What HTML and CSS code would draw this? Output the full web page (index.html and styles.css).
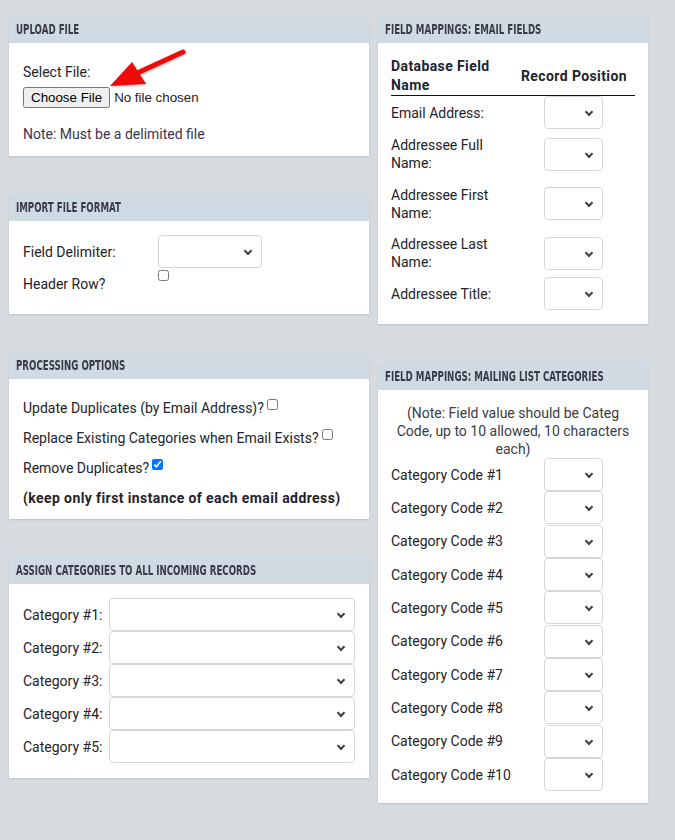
FILE: index.html
```html
<!DOCTYPE html>
<html lang="en">
<head>
<meta charset="utf-8">
<title>Import</title>
<link rel="stylesheet" href="styles.css">
</head>
<body>
<div class="page">
  <div class="col col-left">
    <section class="panel">
      <h2 class="panel-head"><span>Upload File</span></h2>
      <div class="panel-body upload">
        <label class="lbl-block">Select File:</label>
        <input type="file" class="file">
        <p class="note">Note: Must be a delimited file</p>
      </div>
      <svg class="arrow" width="200" height="100" viewBox="0 0 200 100">
        <line x1="126" y1="59" x2="174" y2="37" stroke="#ee0a0a" stroke-width="5" stroke-linecap="round"/>
        <polygon points="101,71 123,47 137,69" fill="#ee0a0a"/>
      </svg>
    </section>

    <section class="panel">
      <h2 class="panel-head"><span>Import File Format</span></h2>
      <div class="panel-body format">
        <label class="fmt-label">Field Delimiter:</label>
        <div class="sel sel-delim"><select></select></div>
        <label class="fmt-label hdr-label">Header Row?</label>
        <div><input type="checkbox" class="cb-hdr"></div>
      </div>
    </section>

    <section class="panel">
      <h2 class="panel-head"><span>Processing Options</span></h2>
      <div class="panel-body processing">
        <p class="opt">Update Duplicates (by Email Address)?<input type="checkbox" class="cb"></p>
        <p class="opt">Replace Existing Categories when Email Exists?<input type="checkbox" class="cb"></p>
        <p class="opt">Remove Duplicates?<input type="checkbox" class="cb" checked></p>
        <p class="opt bold">(keep only first instance of each email address)</p>
      </div>
    </section>

    <section class="panel">
      <h2 class="panel-head"><span>Assign Categories to All Incoming Records</span></h2>
      <div class="panel-body assign">
        <label class="row-label">Category #1:</label><div class="sel"><select></select></div>
        <label class="row-label">Category #2:</label><div class="sel"><select></select></div>
        <label class="row-label">Category #3:</label><div class="sel"><select></select></div>
        <label class="row-label">Category #4:</label><div class="sel"><select></select></div>
        <label class="row-label">Category #5:</label><div class="sel"><select></select></div>
      </div>
    </section>
  </div>

  <div class="col col-right">
    <section class="panel">
      <h2 class="panel-head"><span>Field Mappings: Email Fields</span></h2>
      <div class="panel-body mapping">
        <div class="map-head">
          <div class="mh-name">Database Field<br>Name</div>
          <div class="mh-pos">Record Position</div>
        </div>
        <div class="map-row">
          <label class="map-label">Email Address:</label>
          <div class="sel sel-small"><select></select></div>
        </div>
        <div class="map-row spaced">
          <label class="map-label">Addressee Full<br>Name:</label>
          <div class="sel sel-small"><select></select></div>
        </div>
        <div class="map-row spaced">
          <label class="map-label">Addressee First<br>Name:</label>
          <div class="sel sel-small"><select></select></div>
        </div>
        <div class="map-row tight">
          <label class="map-label">Addressee Last<br>Name:</label>
          <div class="sel sel-small"><select></select></div>
        </div>
        <div class="map-row last">
          <label class="map-label">Addressee Title:</label>
          <div class="sel sel-small"><select></select></div>
        </div>
      </div>
    </section>

    <section class="panel">
      <h2 class="panel-head"><span>Field Mappings: Mailing List Categories</span></h2>
      <div class="panel-body cats">
        <p class="cat-note">(Note: Field value should be Categ<br>Code, up to 10 allowed, 10 characters<br>each)</p>
        <div class="cat-grid">
          <label class="row-label">Category Code #1</label><div class="sel sel-small"><select></select></div>
          <label class="row-label">Category Code #2</label><div class="sel sel-small"><select></select></div>
          <label class="row-label">Category Code #3</label><div class="sel sel-small"><select></select></div>
          <label class="row-label">Category Code #4</label><div class="sel sel-small"><select></select></div>
          <label class="row-label">Category Code #5</label><div class="sel sel-small"><select></select></div>
          <label class="row-label">Category Code #6</label><div class="sel sel-small"><select></select></div>
          <label class="row-label">Category Code #7</label><div class="sel sel-small"><select></select></div>
          <label class="row-label">Category Code #8</label><div class="sel sel-small"><select></select></div>
          <label class="row-label">Category Code #9</label><div class="sel sel-small"><select></select></div>
          <label class="row-label">Category Code #10</label><div class="sel sel-small"><select></select></div>
        </div>
      </div>
    </section>
  </div>
</div>
</body>
</html>
```

FILE: styles.css
```css
* { box-sizing: border-box; }

body {
  margin: 0;
  background: #d6dbe0;
  font-family: Roboto, "Liberation Sans", sans-serif;
  font-size: 14px;
  color: #23232b;
}

.page {
  display: flex;
  align-items: flex-start;
  gap: 9px;
  padding: 15px 9px;
}

.col-left { width: 360px; }
.col-right { width: 270px; }

.panel {
  position: relative;
  background: #fff;
  border-radius: 4px 4px 0 0;
  box-shadow: 0 1px 2px rgba(0, 0, 0, 0.12);
  margin-bottom: 37px;
}
.col-right .panel { margin-bottom: 38px; }

.panel-head {
  margin: 0;
  height: 28px;
  padding-left: 7px;
  display: flex;
  align-items: center;
  background: #d0dae3;
  border-radius: 4px 4px 0 0;
  font-family: "DejaVu Sans Condensed", "DejaVu Sans", sans-serif;
  font-weight: bold;
  font-size: 14.5px;
  color: #3a3a4a;
  text-transform: uppercase;
  white-space: nowrap;
}

.panel-head span {
  display: inline-block;
  transform: scaleX(0.665);
  transform-origin: left center;
}

/* selects */
.sel {
  position: relative;
  height: 33px;
}
.sel select {
  appearance: none;
  -webkit-appearance: none;
  display: block;
  width: 100%;
  height: 100%;
  border: 1px solid #d3d7dc;
  border-radius: 4px;
  background: #fff;
  margin: 0;
}
.sel::after {
  content: "";
  position: absolute;
  right: 11px;
  top: 13px;
  width: 4px;
  height: 4px;
  border-right: 2px solid #3d4248;
  border-bottom: 2px solid #3d4248;
  transform: rotate(45deg);
  pointer-events: none;
}
.sel-small { width: 59px; }
.sel-delim { width: 104px; }

/* upload */
.upload { padding: 19px 14px 12px; }
.lbl-block { display: block; line-height: 20px; }
.file {
  display: block;
  margin-top: 5px;
  font-family: "Liberation Sans", Arial, sans-serif;
  font-size: 13.333px;
  color: #222;
}
.note {
  margin: 16px 0 0;
  line-height: 20px;
  color: #3b3550;
}
.arrow {
  position: absolute;
  left: 0;
  top: 0;
  pointer-events: none;
  filter: drop-shadow(1px 1px 1px rgba(0, 0, 0, 0.25));
}

/* format */
.format {
  display: grid;
  grid-template-columns: 135px 104px;
  padding: 14px 14px 20px;
}
.fmt-label {
  align-self: center;
  line-height: 20px;
}
.hdr-label {
  align-self: start;
  padding-top: 6px;
}
.cb-hdr {
  margin: 1px 0 0 0;
  width: 11px;
  height: 11px;
}

/* processing */
.processing { padding: 19px 14px 11px; }
.opt {
  margin: 0 0 10px;
  line-height: 20px;
}
.opt:last-child { margin-bottom: 0; }
.opt.bold { font-weight: bold; letter-spacing: 0.4px; }
.cb {
  vertical-align: top;
  width: 11px;
  height: 11px;
  margin: 1px 0 0 3px;
}

/* assign */
.assign {
  display: grid;
  grid-template-columns: 86px 246px;
  grid-auto-rows: 33px;
  padding: 14px 14px 15px;
}
.row-label {
  align-self: center;
  line-height: 20px;
  white-space: nowrap;
}

/* mapping */
.mapping { padding: 14px 13px 14px; }
.map-head {
  display: flex;
  border-bottom: 1px solid #111;
  font-weight: bold;
  line-height: 19px;
  letter-spacing: 0.4px;
}
.mh-name { width: 130px; }
.mh-pos { align-self: center; }
.map-row {
  display: grid;
  grid-template-columns: 153px 59px;
  align-items: center;
  min-height: 33px;
  margin-bottom: 7px;
}
.map-row.spaced { margin-bottom: 13.5px; }
.map-row.tight { margin-bottom: 6px; }
.map-row.last { margin-bottom: 0; }
.map-label { line-height: 18px; }

/* categories */
.cats { padding: 14px 13px 12px; }
.cat-note {
  margin: 0;
  text-align: center;
  line-height: 18px;
  color: #3b3b44;
}
.cat-grid {
  display: grid;
  grid-template-columns: 153px 59px;
  grid-auto-rows: 33.33px;
}
```
